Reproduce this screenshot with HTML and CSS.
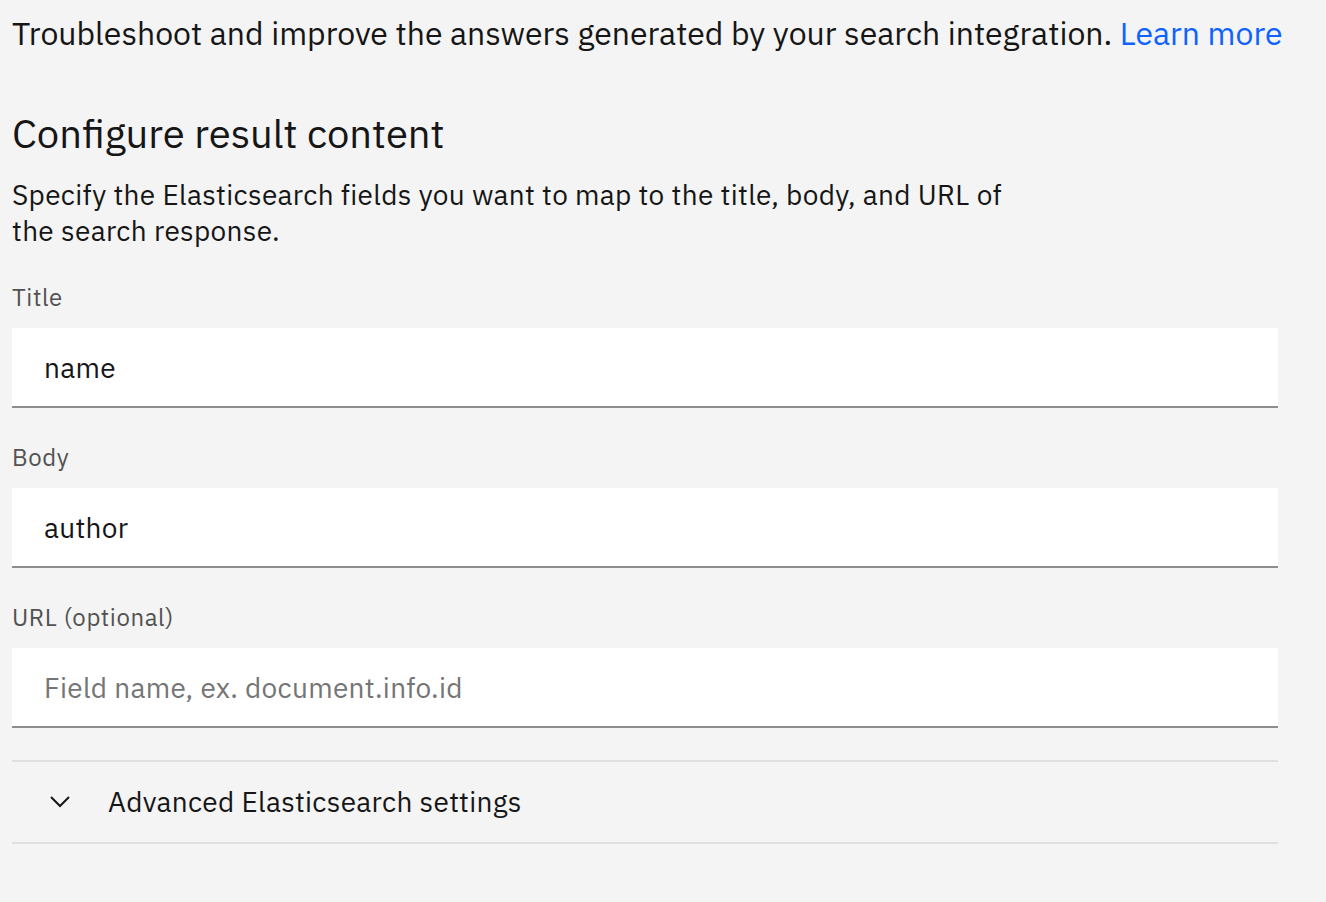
FILE: index.html
```html
<!DOCTYPE html>
<html lang="en">
<head>
<meta charset="utf-8">
<title>Configure result content</title>
<link rel="stylesheet" href="styles.css">
</head>
<body>
<div class="page">
  <p class="intro">Troubleshoot and improve the answers generated by your search integration. <a class="link" href="#">Learn more</a></p>
  <h2 class="heading">Configure result content</h2>
  <p class="desc">Specify the Elasticsearch fields you want to map to the title, body, and URL of<br>the search response.</p>
  <div class="form">
    <div class="field">
      <label class="label" for="f-title">Title</label>
      <input class="input" id="f-title" type="text" value="name">
    </div>
    <div class="field">
      <label class="label" for="f-body">Body</label>
      <input class="input" id="f-body" type="text" value="author">
    </div>
    <div class="field field-last">
      <label class="label" for="f-url">URL (optional)</label>
      <input class="input" id="f-url" type="text" placeholder="Field name, ex. document.info.id">
    </div>
    <div class="accordion">
      <button class="acc-head" type="button">
        <svg class="chev" width="20" height="12" viewBox="0 0 20 12" aria-hidden="true"><path d="M1 1 L10 10 L19 1" fill="none" stroke="#161616" stroke-width="2"/></svg>
        <span class="acc-title">Advanced Elasticsearch settings</span>
      </button>
    </div>
  </div>
</div>
</body>
</html>
```

FILE: styles.css
```css
* { box-sizing: border-box; }
html, body { margin: 0; padding: 0; }
body {
  background: #f4f4f4;
  color: #161616;
  font-family: "IBM Plex Sans", Roboto, "Noto Sans", sans-serif;
}
.page {
  padding: 9px 0 0 12px;
}
.intro {
  margin: 0;
  font-size: 32px;
  line-height: 48px;
  white-space: nowrap;
}
.link {
  color: #0f62fe;
  text-decoration: none;
}
.heading {
  margin: 48px 0 0;
  font-size: 40px;
  line-height: 56px;
  font-weight: 400;
}
.desc {
  margin: 16px 0 0;
  font-size: 28px;
  line-height: 36px;
  letter-spacing: 0.32px;
}
.form {
  width: 1266px;
  margin-top: 32px;
  display: flex;
  flex-direction: column;
}
.field {
  display: flex;
  flex-direction: column;
  margin-bottom: 33px;
}
.field-last {
  margin-bottom: 32px;
}
.label {
  font-size: 24px;
  line-height: 32px;
  color: #525252;
  letter-spacing: 0.6px;
  margin-bottom: 15px;
}
.input {
  height: 80px;
  border: 0;
  border-bottom: 2px solid #8d8d8d;
  background: #fff;
  padding: 0 32px;
  font-family: inherit;
  font-size: 28px;
  color: #161616;
  letter-spacing: 0.3px;
  outline: none;
}
.input::placeholder {
  color: #757575;
}
.accordion {
  border-top: 2px solid #e0e0e0;
  border-bottom: 2px solid #e0e0e0;
}
.acc-head {
  display: flex;
  align-items: center;
  width: 100%;
  height: 80px;
  border: 0;
  background: transparent;
  padding: 0 0 0 38px;
  font-family: inherit;
  color: #161616;
  cursor: pointer;
}
.chev {
  display: block;
  margin-right: 38px;
}
.acc-title {
  font-size: 28px;
  line-height: 36px;
  letter-spacing: 0.3px;
}
```
